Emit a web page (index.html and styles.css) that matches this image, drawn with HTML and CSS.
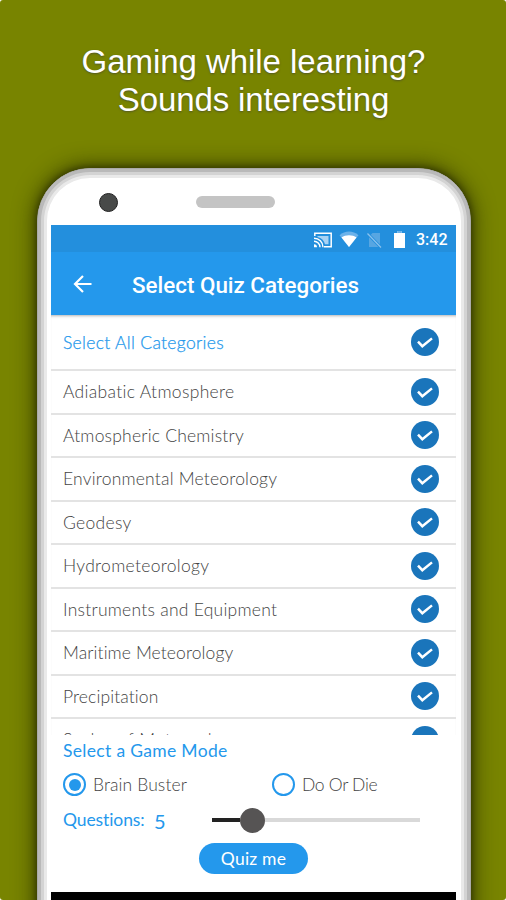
FILE: index.html
```html
<!DOCTYPE html>
<html lang="en">
<head>
<meta charset="utf-8">
<title>Select Quiz Categories</title>
<link rel="stylesheet" href="styles.css">
</head>
<body>
<svg class="defs" width="0" height="0" aria-hidden="true">
  <symbol id="check" viewBox="0 0 28 28">
    <circle cx="14" cy="14" r="14" fill="#1a75bb"/>
    <path d="M7 13.700l4.300 4.500 9.700-7.800" fill="none" stroke="#fff" stroke-width="2.500"/>
  </symbol>
</svg>
<main class="promo">
  <h1 class="headline"><span class="line-one">Gaming while learning?</span><br><span class="line-two">Sounds interesting</span></h1>
  <div class="phone">
    <div class="bezel">
      <div class="camera"></div>
      <div class="speaker"></div>
    </div>
    <div class="screen">
      <div class="status">
        <svg width="18" height="16" viewBox="0 0 18 16">
          <path d="M.8 4V1.2h16.4v13.6H10" fill="none" stroke="#fff" stroke-width="1.5"/>
          <path d="M3.5 4h11v8.3H11C10 8.500 7.500 6 3.500 5z" fill="#a9d2f3"/>
          <path d="M0 6.200a9 9 0 0 1 9 9M0 9.300a6 6 0 0 1 6 6" fill="none" stroke="#fff" stroke-width="1.400"/>
          <path d="M0 12.200a3 3 0 0 1 3 3H0z" fill="#fff"/>
        </svg>
        <svg class="wifi" width="20" height="17" viewBox="0 0 20 17">
          <path d="M.5 4.200C6-.8 14-.8 19.500 4.200L10 16z" fill="#6bb2ea"/>
          <path d="M2.500 6.500c4-3 11-3 15 0L10 16z" fill="#fff"/>
        </svg>
        <svg class="sim" width="15" height="16" viewBox="0 0 15 16">
          <path d="M5.500 1H13v14H2V4.500z" fill="#57a6e2"/>
          <path d="M.5 1.500l13.500 14" stroke="#238fdd" stroke-width="3"/>
          <path d="M.5 1.500l13.500 14" stroke="#8cc3ee" stroke-width="1.200"/>
        </svg>
        <svg class="battery" width="11" height="17" viewBox="0 0 11 17">
          <path d="M3.500 0h4v2H11v15H0V2h3.500z" fill="#fff"/>
          <path d="M3.500 0h4v2h-4z" fill="#6bb2ea"/>
        </svg>
        <span class="time">3:42</span>
      </div>
      <header class="appbar">
        <svg width="19" height="18" viewBox="0 0 19 18" fill="none" stroke="#fff" stroke-width="2.200"><path d="M18.500 9H2M10 1L2 9l8 8"/></svg>
        <span class="title">Select Quiz Categories</span>
      </header>
      <div class="list">
        <div class="row all"><span class="sp-35">Select All Categories</span><svg class="check"><use href="#check"/></svg></div>
        <div class="row"><span class="sp-35">Adiabatic Atmosphere</span><svg class="check"><use href="#check"/></svg></div>
        <div class="row"><span class="sp-20">Atmospheric Chemistry</span><svg class="check"><use href="#check"/></svg></div>
        <div class="row"><span class="sp-20">Environmental Meteorology</span><svg class="check"><use href="#check"/></svg></div>
        <div class="row"><span class="sp-35">Geodesy</span><svg class="check"><use href="#check"/></svg></div>
        <div class="row"><span class="sp-30">Hydrometeorology</span><svg class="check"><use href="#check"/></svg></div>
        <div class="row"><span class="sp-25">Instruments and Equipment</span><svg class="check"><use href="#check"/></svg></div>
        <div class="row"><span class="sp-10">Maritime Meteorology</span><svg class="check"><use href="#check"/></svg></div>
        <div class="row"><span class="sp-10">Precipitation</span><svg class="check"><use href="#check"/></svg></div>
        <div class="row"><span class="sp-50">Scales of Meteorology</span><svg class="check"><use href="#check"/></svg></div>
      </div>
      <section class="options">
        <div class="mode-title">Select a Game Mode</div>
        <div class="modes">
          <label class="mode"><span class="radio on"></span><span class="sp-10">Brain Buster</span></label>
          <label class="mode"><span class="radio"></span><span class="tight">Do Or Die</span></label>
        </div>
        <div class="questions">
          <span class="q-label">Questions:</span><span class="q-count">5</span>
          <div class="slider"><div class="fill"></div><div class="thumb"></div><div class="rest"></div></div>
        </div>
        <button class="go">Quiz me</button>
      </section>
      <div class="navbar"></div>
    </div>
  </div>
</main>
</body>
</html>
```
FILE: styles.css
```css
* { box-sizing: border-box; }

body {
  margin: 0;
  background: #fff;
  font-family: Lato, sans-serif;
}

.defs { position: absolute; }

.promo {
  width: 506px;
  height: 900px;
  overflow: hidden;
  border-radius: 3px;
  background: #788400;
}

.headline {
  height: 168px;
  margin: 0;
  padding: 43px 0 0 1px;
  text-align: center;
  font: 400 33px/38px "Liberation Sans", Arial, sans-serif;
  color: #fff;
  text-shadow: 0 1px 2px rgba(60, 60, 60, .6);
}

.line-one { letter-spacing: -.05px; }
.line-two { letter-spacing: -.1px; }

.phone {
  width: 434px;
  height: 800px;
  margin-left: 37px;
  padding: 9px 10px 0 9px;
  border-radius: 53px 53px 0 0;
  background: #fff;
  border: 1px solid #aaa;
  box-shadow:
    inset 0 0 0 3px #b9b9b9,
    inset 0 0 0 6px #d3d3d3,
    inset 0 0 0 9px #e9e9e9,
    0 0 6px 1px rgba(30, 34, 0, .6),
    0 0 20px 4px rgba(30, 34, 0, .6);
}

.bezel {
  display: flex;
  height: 47px;
  padding: 15px 0 0 52px;
}

.camera {
  width: 19px;
  height: 19px;
  border-radius: 50%;
  background: #484a49;
  border: 1px solid #222;
}

.speaker {
  width: 79px;
  height: 12px;
  margin: 3px 0 0 78px;
  border-radius: 6px;
  background: #c4c4c4;
}

.screen {
  width: 405px;
  margin-left: 4px;
}

.status {
  display: flex;
  align-items: center;
  height: 27px;
  padding: 2px 0 0 263px;
  background: #238fdd;
}

.wifi { margin-left: 7px; }
.sim { margin-left: 8px; }
.battery { margin-left: 12px; }

.time {
  margin-left: 11px;
  font: 500 16px/20px Roboto, sans-serif;
  color: #fff;
}

.appbar {
  display: flex;
  align-items: center;
  height: 63px;
  padding: 0 0 0 22px;
  background: #2498ec;
  color: #fff;
}

.title {
  margin: 2px 0 0 40px;
  font: 500 22.400px/28px Roboto, sans-serif;
}

.list {
  height: 420px;
  overflow: hidden;
  background: #fff;
  box-shadow: inset 0 3px 3px -2px rgba(0, 0, 0, .3);
}

.row {
  display: flex;
  align-items: center;
  justify-content: space-between;
  height: 43.500px;
  padding: 0 17px 0 12px;
  border-bottom: 2px solid #e3e3e3;
  font-size: 17.500px;
  font-weight: 300;
  color: #444;
}

.all {
  height: 56px;
  color: #2498ec;
  -webkit-text-stroke: .25px #2498ec;
}

.check {
  width: 28px;
  height: 28px;
}

.sp-10 { letter-spacing: .1px; }
.sp-20 { letter-spacing: .2px; }
.sp-25 { letter-spacing: .25px; }
.sp-30 { letter-spacing: .3px; }
.sp-35 { letter-spacing: .32px; }
.sp-50 { letter-spacing: .5px; }
.tight { letter-spacing: -.3px; }

.options {
  display: flex;
  flex-direction: column;
  height: 157px;
  padding-left: 12px;
  font-size: 17.500px;
}

.mode-title {
  height: 30px;
  line-height: 31px;
  letter-spacing: .32px;
  color: #2498ec;
}

.modes {
  display: grid;
  grid-template-columns: 209px 1fr;
  height: 38px;
}

.mode {
  display: flex;
  align-items: center;
  gap: 7px;
  font-weight: 300;
  color: #444;
}

.radio {
  width: 23px;
  height: 23px;
  padding: 3.500px;
  border: 2px solid #2498ec;
  border-radius: 50%;
}

.on {
  background: #2498ec content-box;
}

.questions {
  display: flex;
  align-items: center;
  height: 34px;
  color: #2498ec;
}

.q-label {
  width: 91px;
  padding-bottom: 2px;
  letter-spacing: -.1px;
}

.q-count {
  width: 58px;
  padding-top: 2px;
  font-size: 20px;
}

.slider {
  display: flex;
  align-items: center;
  width: 208px;
}

.fill {
  width: 28px;
  height: 4px;
  background: #222;
}

.thumb {
  width: 25px;
  height: 25px;
  border-radius: 50%;
  background: #565454;
}

.rest {
  flex: 1;
  height: 4px;
  background: #d9d9d9;
}

.go {
  width: 109px;
  height: 31px;
  margin: 6px 0 0 136px;
  padding: 0;
  border: 0;
  border-radius: 16px;
  background: #2498ec;
  color: #fff;
  font: 400 17.500px/31px Lato, sans-serif;
  letter-spacing: .2px;
}

.navbar {
  height: 10px;
  background: #000;
}
```
